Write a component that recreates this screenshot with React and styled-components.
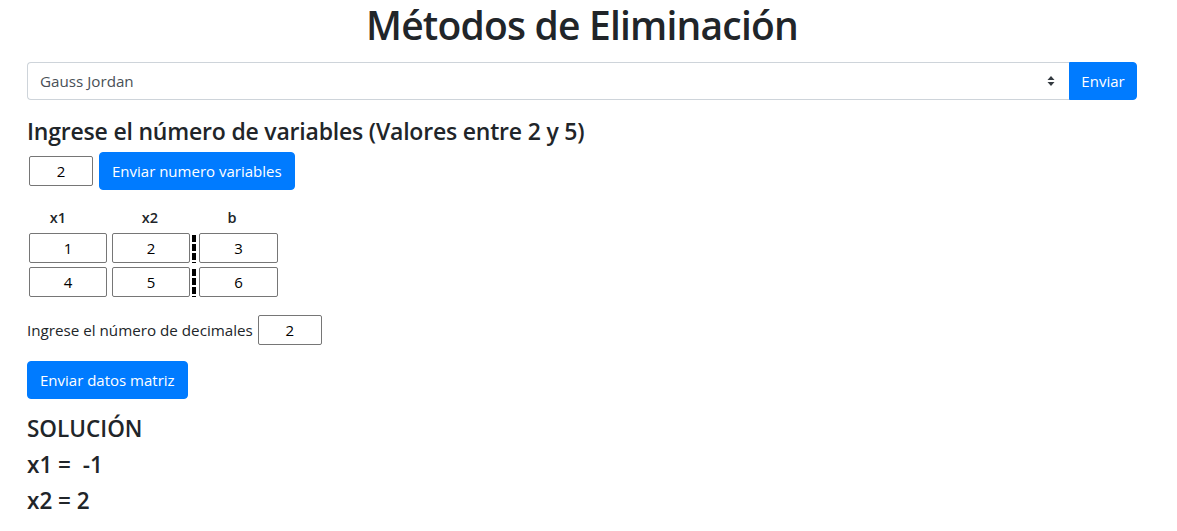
import styled, {createGlobalStyle} from 'styled-components'

const GlobalStyle = createGlobalStyle`
  body {
    margin: 0;
    background: #fff;
    color: #212529;
    font-family: "Open Sans", "Noto Sans", sans-serif;
  }
`

const matrix = [
  [1, 2, 3],
  [4, 5, 6],
]

const App = () => {
  return (
    <Page>
      <GlobalStyle />
      <Title>Métodos de Eliminación</Title>
      <SelectGroup>
        <Select>
          <span>Gauss Jordan</span>
          <Caret>
            <svg width='8' height='12' viewBox='0 0 8 12'>
              <path d='M4 1 L7.5 5 H0.5 Z M4 11 L7.5 7 H0.5 Z' fill='#343a40' />
            </svg>
          </Caret>
        </Select>
        <GroupButton>Enviar</GroupButton>
      </SelectGroup>

      <Heading>Ingrese el número de variables (Valores entre 2 y 5)</Heading>
      <Row>
        <SmallInput defaultValue='2' />
        <Button>Enviar numero variables</Button>
      </Row>

      <Matrix>
        <LabelRow>
          <Label>x1</Label>
          <Label>x2</Label>
          <Label>b</Label>
        </LabelRow>
        {matrix.map((row, i) => (
          <MatrixRow key={i}>
            <Cell defaultValue={row[0]} />
            <Cell defaultValue={row[1]} />
            <Divider />
            <Cell $wide defaultValue={row[2]} />
          </MatrixRow>
        ))}
      </Matrix>

      <Decimals>
        Ingrese el número de decimales
        <SmallInput defaultValue='2' />
      </Decimals>

      <Button>Enviar datos matriz</Button>

      <Result>SOLUCIÓN</Result>
      <Result>x1 = &nbsp;-1</Result>
      <Result>x2 = 2</Result>
    </Page>
  )
}

const Page = styled.div`
  width: 1110px;
  padding: 2px 40px 0 27px;
  display: flex;
  flex-direction: column;
  align-items: flex-start;
`

const Title = styled.h1`
  align-self: stretch;
  text-align: center;
  margin: 0 0 14px;
  font-size: 39px;
  font-weight: 600;
  line-height: 46px;
  letter-spacing: -0.8px;
`

const SelectGroup = styled.div`
  align-self: stretch;
  display: flex;
  height: 38px;
`

const Select = styled.div`
  flex: 1;
  display: flex;
  align-items: center;
  justify-content: space-between;
  padding: 0 14px 0 12px;
  border: 1px solid #ced4da;
  border-right: none;
  border-radius: 4px 0 0 4px;
  font-size: 15.2px;
  color: #495057;
`

const Caret = styled.span`
  display: flex;
`

const Button = styled.button`
  background: #007bff;
  color: #fff;
  border: 1px solid #007bff;
  border-radius: 4px;
  font-family: inherit;
  font-size: 15px;
  height: 38px;
  padding: 0 12px;
  cursor: pointer;
`

const GroupButton = styled(Button)`
  width: 68px;
  padding: 0;
  border-radius: 0 4px 4px 0;
`

const Heading = styled.h4`
  margin: 17px 0 6px;
  font-size: 23px;
  font-weight: 600;
  line-height: 29px;
  letter-spacing: -0.2px;
`

const Row = styled.div`
  display: flex;
  align-items: center;
  gap: 6px;
  padding-left: 2px;
`

const SmallInput = styled.input`
  width: 64px;
  height: 30px;
  box-sizing: border-box;
  border: 1px solid #767676;
  border-radius: 2px;
  text-align: center;
  font-family: inherit;
  font-size: 15px;
  color: #000;
`

const Matrix = styled.div`
  display: flex;
  flex-direction: column;
  gap: 4px;
  margin: 19px 0 0 2px;
`

const LabelRow = styled.div`
  display: grid;
  grid-template-columns: 58px 126px 38px;
  margin-bottom: 2px;
`

const Label = styled.span`
  text-align: center;
  font-size: 14.5px;
  font-weight: 600;
  line-height: 18px;
`

const MatrixRow = styled.div`
  display: flex;
  align-items: stretch;
  gap: 5px;
  height: 30px;
`

const Cell = styled.input`
  width: ${p => (p.$wide ? 79 : 78)}px;
  height: 30px;
  box-sizing: border-box;
  border: 1px solid #767676;
  border-radius: 2px;
  text-align: center;
  font-family: inherit;
  font-size: 15px;
  color: #000;
`

const Divider = styled.span`
  width: 4px;
  margin: 0 -2px 0 -3px;
  background: repeating-linear-gradient(to bottom, transparent 0 2px, #000 2px 9px);
`

const Decimals = styled.label`
  display: flex;
  align-items: center;
  gap: 5px;
  margin: 18px 0 16px;
  font-size: 15.2px;
  color: #212529;
`

const Result = styled.h4`
  margin: 15px 0 0;
  font-size: 22.5px;
  font-weight: 600;
  line-height: 29px;
  & + & {
    margin-top: 7px;
  }
`

export default App
